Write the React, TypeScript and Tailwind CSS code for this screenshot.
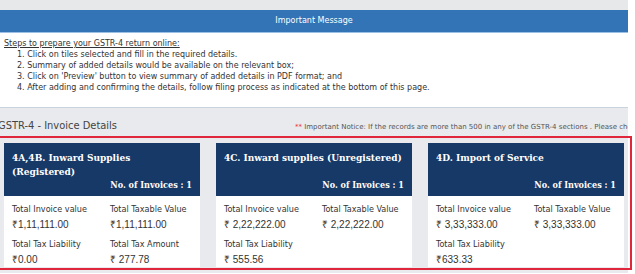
import React from "react";

const tahoma = "font-['DejaVu_Sans_Condensed','DejaVu_Sans',sans-serif]";
const verdana = "font-['DejaVu_Sans',sans-serif]";
const arial = "font-['Liberation_Sans',Arial,sans-serif]";
const serifBold = "font-['DejaVu_Serif_Condensed','DejaVu_Serif',serif] font-bold";

type Field = { label: string; value: string };

type Tile = { title: string[]; fields: Field[] };

const tiles: Tile[] = [
  {
    title: ["4A,4B. Inward Supplies", "(Registered)"],
    fields: [
      { label: "Total Invoice value", value: "₹1,11,111.00" },
      { label: "Total Taxable Value", value: "₹1,11,111.00" },
      { label: "Total Tax Liability", value: "₹0.00" },
      { label: "Total Tax Amount", value: "₹ 277.78" },
    ],
  },
  {
    title: ["4C. Inward supplies (Unregistered)"],
    fields: [
      { label: "Total Invoice value", value: "₹ 2,22,222.00" },
      { label: "Total Taxable Value", value: "₹ 2,22,222.00" },
      { label: "Total Tax Liability", value: "₹ 555.56" },
    ],
  },
  {
    title: ["4D. Import of Service"],
    fields: [
      { label: "Total Invoice value", value: "₹ 3,33,333.00" },
      { label: "Total Taxable Value", value: "₹ 3,33,333.00" },
      { label: "Total Tax Liability", value: "₹633.33" },
    ],
  },
];

function InvoiceTile({ tile }: { tile: Tile }) {
  return (
    <div className="w-[196px] shrink-0 bg-white">
      {/* header */}
      <div className="h-[53px] bg-[#163968] text-white flex flex-col justify-between px-[8px] pt-[8px] pb-[5px]">
        <div className={`${serifBold} text-[10px] leading-[14px]`}>
          {tile.title.map((t) => (
            <div key={t}>{t}</div>
          ))}
        </div>
        <div className={`${serifBold} text-[9px] leading-[12px] text-right`}>No. of Invoices : 1</div>
      </div>
      {/* body */}
      <div className="h-[71px] grid grid-cols-[98px_1fr] content-start gap-y-[8px] px-[8px] pt-[8px] text-[#333]">
        {tile.fields.map((f) => (
          <div key={f.label} className="flex flex-col gap-[4px]">
            <div className={`${tahoma} text-[9px] leading-[11px]`}>{f.label}</div>
            <div className={`${arial} text-[10px] leading-[12px]`}>{f.value}</div>
          </div>
        ))}
      </div>
    </div>
  );
}

export default function App() {
  return (
    <div className="w-[635px] h-[274px] overflow-hidden bg-white">
      <div className="w-[628px]">
        <div className="h-[10px] bg-[#e7e8ea]" />
        <div className={`${verdana} h-[23px] bg-[#3274b6] border-b border-[#9cc0e4] text-white text-[8px] flex items-center justify-center`}>
          Important Message
        </div>

        <div className={`${verdana} text-[8px] leading-[11px] text-[#333] pt-[5px] pl-[4px] h-[74px]`}>
          <div className="underline">Steps to prepare your GSTR-4 return online:</div>
          <ol className="pl-[13px]">
            <li>1. Click on tiles selected and fill in the required details.</li>
            <li>2. Summary of added details would be available on the relevant box;</li>
            <li>3. Click on 'Preview' button to view summary of added details in PDF format; and</li>
            <li>4. After adding and confirming the details, follow filing process as indicated at the bottom of this page.</li>
          </ol>
        </div>

        <div className="bg-[#e8eaed] border-t border-[#c9d3de] h-[166px]">
          <div className="h-[28px] flex items-end justify-between pb-[3px]">
            <div className={`${tahoma} text-[11px] leading-[14px] text-[#444] -ml-[2px] whitespace-nowrap`}>GSTR-4 - Invoice Details</div>
            <div className={`${verdana} text-[7px] leading-[12px] text-[#555] whitespace-nowrap overflow-hidden w-[333px]`}>
              <span className="text-[#e33]">**</span> Important Notice: If the records are more than 500 in any of the GSTR-4 sections . Please check
            </div>
          </div>
          <div className="-ml-[2px] w-[634px] border-2 border-[#e0263a] pt-[5px] pb-[1px] pl-[4px] flex gap-[16px]">
            {tiles.map((t) => (
              <InvoiceTile key={t.title[0]} tile={t} />
            ))}
          </div>
        </div>
      </div>
    </div>
  );
}
